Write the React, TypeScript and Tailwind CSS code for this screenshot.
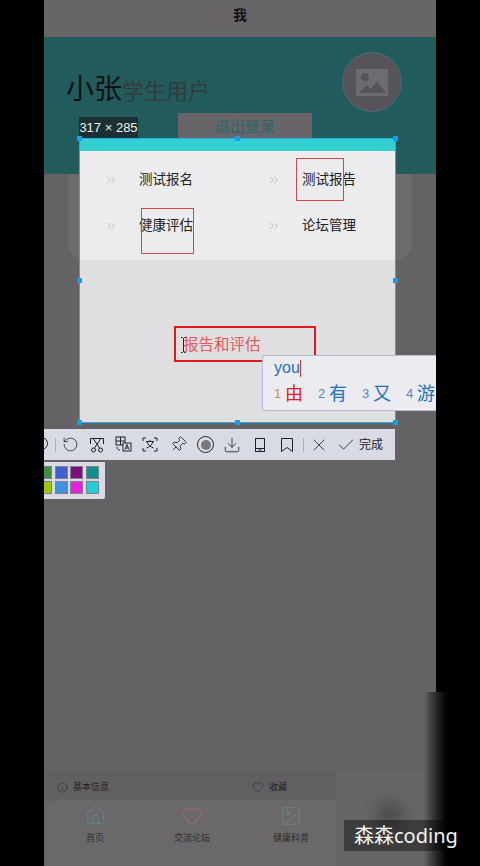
import { Info, Heart, Home, Image, X, Check, RotateCcw, Pin, Download, ChevronsRight } from 'lucide-react';

const font = "font-['Liberation_Sans','Noto_Sans_CJK_SC',sans-serif]";

const swatches = ['#3f8f3f', '#4060d0', '#7d0f80', '#0f9090', '#9cc808', '#4090e0', '#e820e0', '#20d0d8'];

const menuItems = ['测试报名', '测试报告', '健康评估', '论坛管理'];

function ScissorsBoxIcon() {
  return (
    <svg width="16" height="16" viewBox="0 0 16 16" fill="none" stroke="#222" strokeWidth="1">
      <path d="M1.500 7V1.500h13V7" />
      <path d="M4.500 2l6 9M11.500 2l-6 9" />
      <circle cx="4.500" cy="13" r="2" />
      <circle cx="11.500" cy="13" r="2" />
    </svg>
  );
}

function TranslateIcon() {
  return (
    <svg width="17" height="17" viewBox="0 0 17 17" fill="none" stroke="#222" strokeWidth="1">
      <rect x="1" y="1" width="9" height="8" />
      <path d="M1 5h9M5.500 1v8" />
      <rect x="8" y="7" width="8" height="8" fill="#d8dbe4" />
      <path d="M10 13.500l2-5 2 5M11 12h2" />
      <path d="M2 11c0 2 1 3 3 3" />
    </svg>
  );
}

function OcrIcon() {
  return (
    <svg width="16" height="15" viewBox="0 0 16 15" fill="none" stroke="#222" strokeWidth="1">
      <path d="M1 4V1h3M12 1h3v3M15 11v3h-3M4 14H1v-3" />
      <path d="M4 4.500h8M8 3v1.500M5 5c1 3 4 5 6.500 6M11 5c-1 3-4 5-6.500 6" />
    </svg>
  );
}

function PhoneIcon() {
  return (
    <svg width="10" height="14" viewBox="0 0 10 14" fill="none" stroke="#222" strokeWidth="1">
      <rect x="0.500" y="0.500" width="9" height="13" />
      <path d="M1 10.500h8M3.500 12h3" />
    </svg>
  );
}

function BookmarkIcon() {
  return (
    <svg width="12" height="14" viewBox="0 0 12 14" fill="none" stroke="#222" strokeWidth="1">
      <path d="M.5 13.500V.5h11v13L6 9.500z" />
    </svg>
  );
}

function Toolbar() {
  const c = 'shrink-0 text-[#222]';
  return (
    <div className="absolute left-[44px] top-[429px] flex h-[31px] w-[351px] items-center bg-[#d8dbe4]">
      <div className="h-[15px] w-[4px] overflow-hidden">
        <div className="ml-[-9px] h-[13px] w-[13px] rounded-full border border-[#222]" />
      </div>
      <div className="ml-[7px] h-[14px] w-px bg-[#b0b0b4]" />
      <RotateCcw size={17} strokeWidth={1.100} className={`ml-[6px] ${c}`} />
      <div className="ml-[10px] flex"><ScissorsBoxIcon /></div>
      <div className="ml-[10px] flex"><TranslateIcon /></div>
      <div className="ml-[10px] flex"><OcrIcon /></div>
      <Pin size={17} strokeWidth={1.200} className={`ml-[12px] rotate-45 ${c}`} />
      <div className="ml-[10px] flex h-[17px] w-[17px] items-center justify-center rounded-full border border-[#222]">
        <div className="h-[10px] w-[10px] rounded-full bg-[#77777c]" />
      </div>
      <Download size={18} strokeWidth={1.100} className={`ml-[9px] ${c}`} />
      <div className="ml-[14px] flex"><PhoneIcon /></div>
      <div className="ml-[16px] flex"><BookmarkIcon /></div>
      <div className="ml-[10px] h-[14px] w-px bg-[#b0b0b4]" />
      <X size={20} strokeWidth={1} className={`ml-[5px] ${c}`} />
      <Check size={20} strokeWidth={1} className={`ml-[7px] ${c}`} />
      <span className="ml-[3px] text-[12px] text-[#222]">完成</span>
    </div>
  );
}

function Handle({ className }: { className: string }) {
  return <div className={`absolute h-[5px] w-[5px] bg-[#10a0f0] ${className}`} />;
}

function Selection() {
  return (
    <div className="absolute left-[79px] top-[138px] flex h-[285px] w-[317px] flex-col border border-[#20b0f0] bg-[#dfdee1]">
      <div className="h-[12px] bg-[#33cfd1]" />
      <div className="grid h-[109px] grid-cols-[163px_1fr] content-start bg-[#ecebee] pt-[6px]">
        {menuItems.map((label) => (
          <div key={label} className="flex h-[46px] items-center">
            <ChevronsRight size={14} strokeWidth={1.200} className="ml-[24px] text-[#a8a8ac]" />
            <span className="ml-[21px] text-[13.500px] leading-none text-[#222]">{label}</span>
          </div>
        ))}
      </div>
      <Handle className="left-[-3px] top-[-3px]" />
      <Handle className="left-[155px] top-[-3px]" />
      <Handle className="right-[-3px] top-[-3px]" />
      <Handle className="left-[-3px] top-[139px]" />
      <Handle className="right-[-3px] top-[139px]" />
      <Handle className="bottom-[-3px] left-[-3px]" />
      <Handle className="bottom-[-3px] left-[155px]" />
      <Handle className="bottom-[-3px] right-[-3px]" />
      <div className="absolute left-[61px] top-[69px] h-[46px] w-[53px] border border-[#d04848]" />
      <div className="absolute left-[216px] top-[19px] h-[43px] w-[48px] border border-[#d04848]" />
      <div className="absolute left-[94px] top-[187px] flex h-[36px] w-[142px] items-center border-2 border-[#e01818] pl-[7px] pt-[1px] text-[15.500px] text-[#e05a5a]">
        <span>报告和评估</span>
      </div>
      <svg className="absolute left-[100px] top-[198px]" width="7" height="16" viewBox="0 0 7 16" fill="none" stroke="#222" strokeWidth="1">
        <path d="M1 .5h1.500l1 1 1-1H6M3.500 1.500v13M1 15.500h1.500l1-1 1 1H6" />
      </svg>
    </div>
  );
}

function Ime() {
  const cands = [
    ['1', '由'],
    ['2', '有'],
    ['3', '又'],
    ['4', '游'],
  ];
  return (
    <div className="absolute left-[262px] top-[355px] h-[56px] w-[174px] overflow-hidden rounded-l-[3px] border border-r-0 border-[#b0c0d8] bg-[#ebebf0] pl-[11px]">
      <div className="flex h-[24px] items-center">
        <span className="text-[16px] text-[#2070c0]">you</span>
        <span className="h-[17px] w-px bg-[#d03030]" />
      </div>
      <div className="flex h-[28px] items-center gap-[15px] whitespace-nowrap">
        {cands.map(([n, w], i) => (
          <span key={n} className="flex items-center gap-[4px]">
            <span className={`w-[7px] text-[13px] ${i === 0 ? 'text-[#e08050]' : 'text-[#5088c8]'}`}>{n}</span>
            <span className={`text-[18px] leading-none ${i === 0 ? 'text-[#e02020]' : 'text-[#2070c0]'}`}>{w}</span>
          </span>
        ))}
      </div>
    </div>
  );
}

function Palette() {
  return (
    <div className="absolute left-[44px] top-[462px] h-[37px] w-[61px] overflow-hidden rounded-br-[2px] bg-[#d8dbe4]">
      <div className="ml-[-5px] mt-[4px] grid w-[60px] grid-cols-4 gap-[2px]">
        {swatches.map((s) => (
          <div key={s} className="h-[13px] w-[13px] border border-[#808088]" style={{ backgroundColor: s }} />
        ))}
      </div>
    </div>
  );
}

export default function App() {
  return (
    <div className={`relative h-[866px] w-[480px] overflow-hidden bg-black ${font}`}>
      <div className="ml-[44px] flex h-[866px] w-[392px] flex-col bg-[#646264]">
        <div className="flex h-[37px] items-center justify-center bg-[#676567] pb-[6px] text-[14px] font-bold text-[#111]">
          我
        </div>
        {/* banner */}
        <div className="relative h-[137px] bg-[#225b5c] pl-[22px]">
          <div className="flex items-end pt-[35px]">
            <span className="text-[28px] leading-[36px] text-[#111]">小张</span>
            <span className="pb-[3px] text-[22px] leading-[26px] text-[#333a3c]">学生用户</span>
          </div>
          <div className="absolute left-[298px] top-[15px] flex h-[60px] w-[60px] items-center justify-center rounded-full border border-[#4a6e70] bg-[#565458]">
            <svg width="32" height="27" viewBox="0 0 32 27">
              <rect width="32" height="27" fill="#6e6c70" />
              <circle cx="9" cy="8" r="4" fill="#565458" />
              <path d="M3 24l8-8 4 4 6-8 9 12z" fill="#565458" />
            </svg>
          </div>
          <div className="absolute left-[134px] top-[76px] flex h-[26px] w-[134px] items-center justify-center bg-[#676567] pt-[2px] text-[15px] text-[#2a6668]">
            退出登录
          </div>
        </div>
        <div className="mx-[24px] mt-[-23px] h-[109px] rounded-[16px] bg-[#6c6a6c]" />
        <div className="flex-1" />
        {/* bottom rows */}
        <div className="flex h-[94px] bg-[#676567]">
          <div className="flex w-[292px] flex-col">
            <div className="flex h-[28px] items-center bg-[#615f61] pt-[3px] text-[9px] text-[#222]">
              <div className="flex w-[196px] items-center gap-[5px] pl-[13px]">
                <Info size={11} strokeWidth={1} />
                <span>基本信息</span>
              </div>
              <div className="flex items-center gap-[5px] pl-[12px]">
                <Heart size={12} strokeWidth={1} className="mt-[-2px]" />
                <span>收藏</span>
              </div>
            </div>
            <div className="flex h-[66px] rounded-tl-[16px] bg-[#6a686a] pt-[5px] text-[9px] text-[#2e2e30]">
              <div className="flex w-[102px] flex-col items-center">
                <Home size={21} strokeWidth={1} className="text-[#5d8d90]" />
                <span className="mt-[6px]">首页</span>
              </div>
              <div className="flex w-[92px] flex-col items-center">
                <Heart size={22} strokeWidth={1.200} className="text-[#9a6a78]" />
                <span className="mt-[5px]">交流论坛</span>
              </div>
              <div className="flex w-[98px] flex-col items-center pl-[8px]">
                <Image size={22} strokeWidth={1} className="text-[#6a8e6c]" />
                <span className="mt-[5px]">健康科普</span>
              </div>
            </div>
          </div>
        </div>
      </div>

      {/* blurred edge at the lower right of the recording */}
      <div className="absolute left-[424px] top-[692px] h-[174px] w-[28px] bg-gradient-to-r from-[#646264] to-black" />
      <div className="absolute left-[378px] top-[802px] h-[28px] w-[24px] rounded-full bg-[#4a494a] blur-sm" />

      <div className="absolute left-[79px] top-[117px] flex h-[21px] w-[59px] items-center justify-center bg-[#1a3032] text-[13px] text-[#f0f0f0]">
        317 × 285
      </div>
      <Selection />
      <Ime />
      <Toolbar />
      <Palette />
      <div className="absolute left-[344px] top-[820px] flex h-[31px] w-[126px] items-center bg-[#00000066] pl-[10px] font-['Noto_Sans','Noto_Sans_CJK_SC',sans-serif] text-[20px] leading-none text-[#f4f4f4]">
        森森coding
      </div>
    </div>
  );
}
